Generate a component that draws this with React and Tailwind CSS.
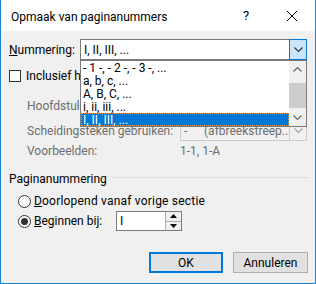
import React from "react";

const ChevronDown = ({ color = "#333", w = 9, h = 5 }) => (
  <svg width={w} height={h} viewBox="0 0 9 5">
    <path d="M0.5 0.5 L4.5 4.5 L8.5 0.5" fill="none" stroke={color} strokeWidth="1.1" />
  </svg>
);
const ChevronUp = ({ color = "#333" }) => (
  <svg width="9" height="5" viewBox="0 0 9 5">
    <path d="M0.5 4.5 L4.5 0.5 L8.5 4.5" fill="none" stroke={color} strokeWidth="1.1" />
  </svg>
);

const Radio = ({ checked }) => (
  <span className="w-[13px] h-[13px] rounded-full border border-[#333] bg-white flex items-center justify-center shrink-0">
    {checked && <span className="w-[7px] h-[7px] rounded-full bg-[#333]" />}
  </span>
);

export default function App() {
  const items = ["- 1 -, - 2 -, - 3 -, ...", "a, b, c, ...", "A, B, C, ...", "i, ii, iii, ...", "I, II, III, ..."];
  return (
    <div className="relative w-[316px] h-[284px] bg-[#f0f0f0] border-x border-b border-[#1883d7] flex flex-col overflow-hidden font-['Roboto',sans-serif] text-[12px] text-black">
      {/* Title bar */}
      <div className="h-[31px] bg-white flex items-center shrink-0">
        <div className="pl-[10px] flex-1 leading-none pt-[2px]">Opmaak van paginanummers</div>
        <div className="w-[46px] h-full flex items-center justify-center text-[13px]">?</div>
        <div className="w-[46px] h-full flex items-center justify-center">
          <svg width="10" height="10" viewBox="0 0 10 10">
            <path d="M0 0 L10 10 M10 0 L0 10" stroke="#000" strokeWidth="1" />
          </svg>
        </div>
      </div>

      {/* Body */}
      <div className="flex flex-col pl-[8px] pr-[7px]">
        {/* Nummering */}
        <div className="mt-[8px] h-[21px] flex items-center">
          <div className="w-[71px]">
            <span className="underline">N</span>ummering:
          </div>
          <div className="relative w-[227px] h-[21px] border border-[#7a7a7a] bg-white flex items-center pl-[3px]">
            I, II, III, ...
            <div className="absolute -top-px -right-px -bottom-px w-[18px] border border-[#0078d7] bg-[#cce4f7] flex items-center justify-center">
              <ChevronDown />
            </div>
          </div>
        </div>

        {/* Inclusief */}
        <div className="mt-[6px] h-[20px] flex items-center">
          <span className="w-[12px] h-[12px] border border-[#333] bg-white shrink-0" />
          <span className="ml-[5px] w-[54px] overflow-hidden whitespace-nowrap">Inclusief hoofdstuknummer</span>
        </div>

        {/* Hoofdstuk */}
        <div className="mt-[9px] h-[21px] flex items-center pl-[18px] text-[#6d6d6d]">
          <div className="w-[52px] overflow-hidden whitespace-nowrap">Hoofdstuk begint met stijl:</div>
        </div>

        {/* Scheidingsteken */}
        <div className="mt-[4px] h-[21px] flex items-center pl-[18px] text-[#6d6d6d]">
          <div className="w-[153px] whitespace-nowrap">Scheidingsteken gebruiken:</div>
          <div className="relative w-[127px] h-[21px] border border-[#cccccc] bg-[#f0f0f0] flex items-center pl-[3px] whitespace-nowrap overflow-hidden">
            <span className="w-[20px]">-</span>
            <span>(afbreekstreep...</span>
            <div className="absolute top-0 right-0 bottom-0 w-[17px] border-l border-[#cccccc] bg-[#f0f0f0] flex items-center justify-center">
              <ChevronDown color="#a0a0a0" />
            </div>
          </div>
        </div>

        {/* Voorbeelden */}
        <div className="h-[20px] flex items-center pl-[18px] text-[#6d6d6d]">
          <div className="w-[153px]">Voorbeelden:</div>
          <div>1-1, 1-A</div>
        </div>

        {/* Paginanummering group */}
        <div className="mt-[8px] h-[20px] flex items-center">
          <span>Paginanummering</span>
          <span className="flex-1 ml-[5px] h-px bg-[#dcdcdc] mb-[3px]" />
        </div>
        <div className="mt-[2px] h-[20px] flex items-center pl-[9px]">
          <Radio />
          <span className="ml-[3px] tracking-[0.2px]">
            <span className="underline">D</span>oorlopend vanaf vorige sectie
          </span>
        </div>
        <div className="h-[20px] flex items-center pl-[9px]">
          <Radio checked />
          <span className="ml-[3px] w-[82px]">
            <span className="underline">B</span>eginnen bij:
          </span>
          <div className="w-[66px] h-[20px] border border-[#7a7a7a] bg-white flex items-center">
            <span className="flex-1 pl-[3px]">I</span>
            <div className="w-[16px] h-full flex flex-col border-l border-[#adadad] bg-[#f0f0f0]">
              <div className="flex-1 flex items-center justify-center border-b border-[#adadad]">
                <svg width="7" height="4" viewBox="0 0 7 4"><path d="M0 4 L3.5 0 L7 4 Z" fill="#000" /></svg>
              </div>
              <div className="flex-1 flex items-center justify-center">
                <svg width="7" height="4" viewBox="0 0 7 4"><path d="M0 0 L3.5 4 L7 0 Z" fill="#000" /></svg>
              </div>
            </div>
          </div>
        </div>

        {/* Buttons */}
        <div className="mt-[21px] h-[21px] flex justify-end gap-[10px]">
          <button className="w-[74px] h-[21px] border-2 border-[#0078d7] bg-[#e1e1e1] flex items-center justify-center">OK</button>
          <button className="w-[75px] h-[21px] border border-[#adadad] bg-[#e1e1e1] flex items-center justify-center">Annuleren</button>
        </div>
      </div>

      {/* Open dropdown list */}
      <div className="absolute left-[79px] top-[60px] w-[227px] h-[67px] border border-[#7a7a7a] bg-white flex">
        <div className="flex-1 flex flex-col">
          {items.map((it, i) => (
            <div
              key={i}
              className={
                i === 4
                  ? "h-[13px] leading-[12px] pl-[1px] bg-[#0078d7] text-white border border-dotted border-[#e8a050] whitespace-nowrap"
                  : "h-[13px] leading-[14px] pl-[2px] whitespace-nowrap"
              }
            >
              {it}
            </div>
          ))}
        </div>
        <div className="w-[17px] bg-[#f0f0f0] flex flex-col">
          <div className="h-[17px] flex items-center justify-center">
            <ChevronUp color="#606060" />
          </div>
          <div className="mt-[5px] h-[25px] bg-[#cdcdcd]" />
          <div className="flex-1 flex items-center justify-center">
            <ChevronDown color="#606060" />
          </div>
        </div>
      </div>
    </div>
  );
}
